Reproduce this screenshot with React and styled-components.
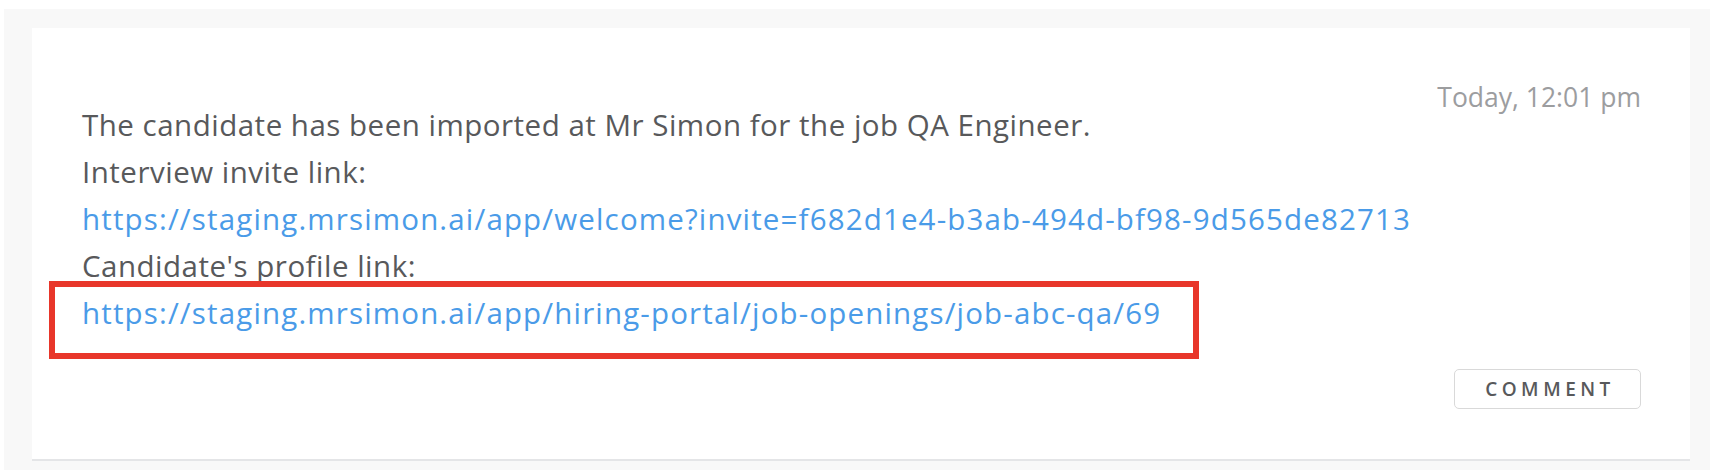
import React from "react";
import styled, { createGlobalStyle } from "styled-components";

const GlobalStyle = createGlobalStyle`
  html, body {
    margin: 0;
    background: #ffffff;
  }
  body {
    font-family: "Open Sans", "Noto Sans", sans-serif;
  }
`;

/** page frame */
const Page = styled.div`
  padding: 9px 0 0 4px;
  height: 470px;
  box-sizing: border-box;
  overflow: hidden;
`;

/** gray activity panel */
const Panel = styled.div`
  background: #f8f8f8;
  padding: 19px 20px 10px 28px;
  height: 100%;
  box-sizing: border-box;
`;

/** white event card */
const Card = styled.div`
  background: #ffffff;
  border-bottom: 2px solid #e4e5e7;
  padding: 54px 49px 50px 50px;
  display: flex;
  flex-direction: column;
`;

const Head = styled.div`
  display: grid;
  grid-template-columns: 1fr auto;
  align-items: start;
`;

const Message = styled.div`
  padding-top: 19px;
  font-size: 29.5px;
  line-height: 47px;
  letter-spacing: 0.5px;
  color: #58595b;
`;

const Line = styled.div`
  white-space: nowrap;
`;

const Url = styled.a`
  color: #4a9be8;
  text-decoration: none;
  letter-spacing: 1.15px;
  position: relative;
  display: inline-block;
`;

/** red annotation box over the link */
const Highlight = styled.span`
  position: absolute;
  top: -8px;
  bottom: -23px;
  left: -33px;
  right: -38px;
  border: 6px solid #e8362a;
  pointer-events: none;
`;

const Time = styled.div`
  font-size: 26.5px;
  line-height: 30px;
  color: #9c9d9f;
  white-space: nowrap;
`;

const Footer = styled.div`
  display: flex;
  justify-content: flex-end;
  margin-top: 33px;
`;

const CommentButton = styled.button`
  width: 187px;
  height: 40px;
  background: #ffffff;
  border: 1.5px solid #d9d9d9;
  border-radius: 5px;
  font-family: "Open Sans", sans-serif;
  font-size: 19px;
  font-weight: 600;
  letter-spacing: 4.5px;
  color: #58595b;
  padding: 0 0 0 5px;
  cursor: pointer;
`;

export default function App() {
  return (
    <>
      <GlobalStyle />
      <Page>
        <Panel>
          <Card>
            <Head>
              <Message>
                <Line>The candidate has been imported at Mr Simon for the job QA Engineer.</Line>
                <Line>Interview invite link:</Line>
                <Line>
                  <Url href="#">
                    https://staging.mrsimon.ai/app/welcome?invite=f682d1e4-b3ab-494d-bf98-9d565de82713
                  </Url>
                </Line>
                <Line>Candidate's profile link:</Line>
                <Line>
                  <Url href="#">
                    https://staging.mrsimon.ai/app/hiring-portal/job-openings/job-abc-qa/69
                    <Highlight />
                  </Url>
                </Line>
              </Message>
              <Time>Today, 12:01 pm</Time>
            </Head>
            <Footer>
              <CommentButton>COMMENT</CommentButton>
            </Footer>
          </Card>
        </Panel>
      </Page>
    </>
  );
}
